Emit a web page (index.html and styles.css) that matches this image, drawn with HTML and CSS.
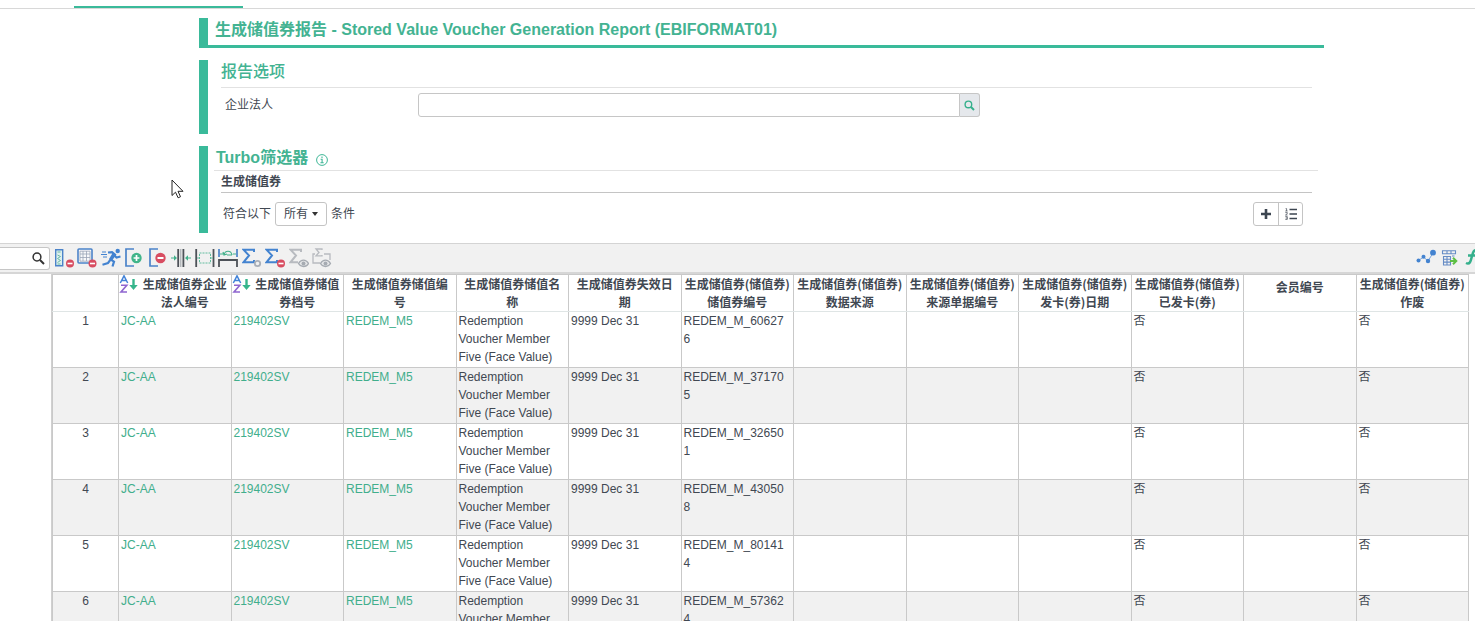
FILE: index.html
```html
<!DOCTYPE html>
<html lang="zh-CN">
<head>
<meta charset="utf-8">
<title>生成储值券报告</title>
<link rel="stylesheet" href="styles.css">
</head>
<body>
<div class="tabstrip"><div class="tab-active"></div></div>

<main class="form">
  <h1 class="title">生成储值券报告 - Stored Value Voucher Generation Report (EBIFORMAT01)</h1>

  <section class="panel options">
    <h2 class="panel-heading">报告选项</h2>
    <div class="field">
      <label for="entity">企业法人</label>
      <div class="lookup">
        <input id="entity" type="text">
        <button type="button" aria-label="查找"><svg width="11" height="11" viewBox="0 0 11 11" fill="none" stroke="#35b08c"><circle cx="4.4" cy="4.4" r="3.3" stroke-width="1.4"/><path d="M7 7l3 3" stroke-width="2"/></svg></button>
      </div>
    </div>
  </section>

  <section class="panel turbo">
    <h2 class="panel-heading">Turbo筛选器
      <svg class="info" width="12" height="12" viewBox="0 0 12 12" fill="none" stroke="#3fb797"><circle cx="6" cy="6" r="5.4"/><path d="M6 2.6v1.3M4.6 5.3h1.5v3.4M4.4 8.8h3.3" stroke-width="1.1"/></svg>
    </h2>
    <h3 class="group">生成储值券</h3>
    <div class="match">
      <span>符合以下</span>
      <button type="button" class="btn">所有 <i class="caret"></i></button>
      <span>条件</span>
      <div class="btn-group">
        <button type="button" aria-label="添加"><svg width="10" height="10" viewBox="0 0 10 10"><path d="M5 0v10M0 5h10" stroke="#3c4550" stroke-width="2.6"/></svg></button>
        <button type="button" aria-label="编号列表"><svg width="12" height="12" viewBox="0 0 12 12" fill="none" stroke="#3c4550"><path d="M4.5 1.5H12M4.5 6H12M4.5 10.5H12" stroke-width="1.3"/><path d="M.6 .6h1V3M.3 3h2.3M.3 4.6h2v1L.5 7h2M.3 8.6h2v2.8h-2M.7 10h1.6" stroke-width=".7"/></svg></button>
      </div>
    </div>
  </section>
</main>

<div class="toolbar">
  <div class="search">
    <input type="text" aria-label="搜索">
    <svg width="13" height="13" viewBox="0 0 13 13" fill="none" stroke="#333"><circle cx="5" cy="5" r="3.9" stroke-width="1.5"/><path d="M8 8l4 4" stroke-width="2"/></svg>
  </div>
  <div class="tools">
    <button type="button" aria-label="删除列"><svg viewBox="0 0 20 20"><path d="M1.7 1.7h7v16h-7z" fill="#dcefed" stroke="#4b83c9" stroke-width="1.4"/><path d="M3.5 4h3M3.5 7l3 1.5-3 2 3 2-3 2M3.5 16h3" fill="none" stroke="#66b8a4"/><circle cx="16" cy="15.5" r="4" fill="#d84d61"/><path d="M13.5 15.5h5" stroke="#fff" stroke-width="1.6"/></svg></button>
    <button type="button" aria-label="删除表格"><svg viewBox="0 0 20 20"><rect x="1" y="1" width="14" height="14" rx="1" fill="#f7f8fb" stroke="#4b83c9" stroke-width="1.6"/><path d="M3 6h10M3 9.5h10M6 3v10M9.5 3v10M3 3.2h10v10H3z" fill="none" stroke="#9ba5b8" stroke-width=".8"/><circle cx="15.5" cy="15.5" r="4" fill="#d84d61"/><path d="M13 15.5h5" stroke="#fff" stroke-width="1.6"/></svg></button>
    <button type="button" aria-label="运行"><svg viewBox="0 0 20 20" fill="none" stroke="#4383d0"><circle cx="16.7" cy="3" r="2.2" fill="#4383d0" stroke="none"/><path d="M7 4.5l4-.3 3 2.5-4 5 3 2-1.5 4.8" stroke-width="2.2"/><path d="M10 11l-3 4-5.5 1.7M13 7l2.5 2.5 4-1" stroke-width="2.1"/><path d="M12 4.5L8 11l2.5 1.5L15 7z" fill="#4383d0" stroke="none"/><path d="M1 4h4M0 6.5h6M2 9h4" stroke-width="1"/></svg></button>
    <button type="button" aria-label="插入列"><svg viewBox="0 0 20 20"><path d="M10 1H2v17h8M5 18h5" fill="none" stroke="#4b83c9" stroke-width="1.7"/><circle cx="12.5" cy="10" r="5.2" fill="#41b58a"/><path d="M9.6 10h5.8M12.5 7.1v5.8" stroke="#fff" stroke-width="1.7"/></svg></button>
    <button type="button" aria-label="移除列"><svg viewBox="0 0 20 20"><path d="M10 1H2v17h8" fill="none" stroke="#4b83c9" stroke-width="1.7"/><circle cx="12.5" cy="10" r="5.2" fill="#d84d61"/><path d="M9.5 10h6" stroke="#fff" stroke-width="2"/></svg></button>
    <button type="button" aria-label="收窄列"><svg viewBox="0 0 20 20"><path d="M7.2 1v18M12.4 1v18" stroke="#4d5258" stroke-width="1.8"/><path d="M9.8 1v18" stroke="#9aa0a6"/><path d="M0 10h5M20 10h-5" stroke="#42b18b" stroke-width="1.2"/><path d="M3 7.2L6 10l-3 2.8zM17 7.2L14 10l3 2.8z" fill="#42b18b"/></svg></button>
    <button type="button" aria-label="适合列宽"><svg viewBox="0 0 20 20" fill="none"><path d="M1.2 1v18M18.5 1v18" stroke="#4d5258" stroke-width="1.8"/><path d="M4.5 5h11v10h-11z" stroke="#62bd9f" stroke-dasharray="2 1"/><path d="M2 10h3M15 10h3" stroke="#62bd9f"/></svg></button>
    <button type="button" aria-label="还原列宽"><svg viewBox="0 0 20 20" fill="none"><path d="M1 1v8M19 1v8" stroke="#4b83c9" stroke-width="1.7"/><path d="M1 19v-7h18v7" stroke="#4d5258" stroke-width="1.8"/><path d="M2 6h3M15 6h3M6 7c1-5 7-5 8 0M5 4l1 3 3-1M14 7H9" stroke="#42b18b" stroke-width="1.2"/></svg></button>
    <button type="button" aria-label="合计设置"><svg viewBox="0 0 20 20" fill="none"><path d="M12 4V1.7H1.5L7 7.5l-5.5 6.8H12V12" stroke="#4383d0" stroke-width="2"/><circle cx="15.5" cy="15.5" r="2.7" stroke="#a9afb8" stroke-width="1.8"/></svg></button>
    <button type="button" aria-label="移除合计"><svg viewBox="0 0 20 20" fill="none"><path d="M12 4V1.7H1.5L7 7.5l-5.5 6.8H12V12" stroke="#4383d0" stroke-width="2"/><circle cx="16" cy="15.5" r="4" fill="#d84d61"/><path d="M13.5 15.5h5" stroke="#fff" stroke-width="1.6"/></svg></button>
    <button type="button" aria-label="显示合计"><svg viewBox="0 0 20 20" fill="none"><path d="M12 4V1.7H1.5L7 7.5l-5.5 6.8H9" stroke="#b8bbc0" stroke-width="2"/><path d="M9.5 15.5c2.5-4.5 7.5-4.5 10 0-2.5 4-7.5 4-10 0z" fill="#e8e9eb" stroke="#a6abb2" stroke-width="1.3"/><circle cx="14.5" cy="15.5" r="2" fill="#a6abb2"/></svg></button>
    <button type="button" aria-label="显示小计"><svg viewBox="0 0 20 20" fill="none"><path d="M10 2V1H4l3 3.5-3 3.3h6V7" stroke="#b8bbc0" stroke-width="1.3"/><path d="M3 6H1v9h7M12 6h6v6" stroke="#b8bbc0" stroke-width="1.3"/><path d="M8.5 15.5c2.5-4.5 7.5-4.5 10 0-2.5 4-7.5 4-10 0z" fill="#e8e9eb" stroke="#a6abb2" stroke-width="1.3"/><circle cx="13.5" cy="15.5" r="2" fill="#a6abb2"/></svg></button>
  </div>
  <div class="tools-right">
    <button type="button" aria-label="图表"><svg viewBox="0 0 20 20"><path d="M2.5 12.5l5-3.5 4.5 4L17 5" fill="none" stroke="#79a5dc"/><g fill="#4383d0"><circle cx="2.5" cy="12.5" r="2"/><circle cx="7.5" cy="8.7" r="2"/><circle cx="12" cy="13" r="2.2"/><circle cx="17" cy="4.7" r="2.9"/></g></svg></button>
    <button type="button" aria-label="汇总表"><svg viewBox="0 0 20 20" fill="none"><path d="M3.5 2.7h13v3h-13zM4.5 8.5h7v8.5h-7zM8 8.5V17M4.5 11.3h7M4.5 14.1h7M8 2.7v3M12 2.7v3M13 8h2.5" stroke="#668cc5" stroke-width="1.1"/><path d="M11 13h5M14 9.7l3.3 3.3L14 16.3" stroke="#5dbf45" stroke-width="2"/></svg></button>
    <button type="button" aria-label="函数"><svg viewBox="0 0 20 20" fill="none"><path d="M15 3c-3-2-4 1-5 5-1.2 5-2 9-6 7M6 7.5h8" stroke="#35b08c" stroke-width="2.5"/></svg></button>
  </div>
</div>

<div class="grid-wrap">
<table class="grid">
  <colgroup><col class="col-num"><col span="12"></colgroup>
  <thead>
    <tr>
      <th></th>
      <th><div class="sorted"><svg width="20" height="18" viewBox="0 0 20 18" fill="none"><path d="M1.3 8L5 .8 8.7 8M2.6 5.6h4.8" stroke="#4383d8" stroke-width="1.5"/><path d="M2 10.3h5.8L2 17h6" stroke="#8f65cf" stroke-width="1.6"/><path d="M14.5 4v8" stroke="#36b58c" stroke-width="2.4"/><path d="M10.3 10h8.4l-4.2 5z" fill="#36b58c"/></svg><span>生成储值券企业法人编号</span></div></th>
      <th><div class="sorted"><svg width="20" height="18" viewBox="0 0 20 18" fill="none"><path d="M1.3 8L5 .8 8.7 8M2.6 5.6h4.8" stroke="#4383d8" stroke-width="1.5"/><path d="M2 10.3h5.8L2 17h6" stroke="#8f65cf" stroke-width="1.6"/><path d="M14.5 4v8" stroke="#36b58c" stroke-width="2.4"/><path d="M10.3 10h8.4l-4.2 5z" fill="#36b58c"/></svg><span>生成储值券储值券档号</span></div></th>
      <th>生成储值券储值编号</th>
      <th>生成储值券储值名称</th>
      <th>生成储值券失效日期</th>
      <th>生成储值券(储值券)<br>储值券编号</th>
      <th>生成储值券(储值券)<br>数据来源</th>
      <th>生成储值券(储值券)<br>来源单据编号</th>
      <th>生成储值券(储值券)<br>发卡(券)日期</th>
      <th>生成储值券(储值券)<br>已发卡(券)</th>
      <th class="single">会员编号</th>
      <th>生成储值券(储值券)<br>作废</th>
    </tr>
  </thead>
  <tbody>
    <tr><td>1</td><td><a href="#">JC-AA</a></td><td><a href="#">219402SV</a></td><td><a href="#">REDEM_M5</a></td><td>Redemption Voucher Member Five (Face Value)</td><td>9999 Dec 31</td><td>REDEM_M_606276</td><td></td><td></td><td></td><td>否</td><td></td><td>否</td></tr>
    <tr><td>2</td><td><a href="#">JC-AA</a></td><td><a href="#">219402SV</a></td><td><a href="#">REDEM_M5</a></td><td>Redemption Voucher Member Five (Face Value)</td><td>9999 Dec 31</td><td>REDEM_M_371705</td><td></td><td></td><td></td><td>否</td><td></td><td>否</td></tr>
    <tr><td>3</td><td><a href="#">JC-AA</a></td><td><a href="#">219402SV</a></td><td><a href="#">REDEM_M5</a></td><td>Redemption Voucher Member Five (Face Value)</td><td>9999 Dec 31</td><td>REDEM_M_326501</td><td></td><td></td><td></td><td>否</td><td></td><td>否</td></tr>
    <tr><td>4</td><td><a href="#">JC-AA</a></td><td><a href="#">219402SV</a></td><td><a href="#">REDEM_M5</a></td><td>Redemption Voucher Member Five (Face Value)</td><td>9999 Dec 31</td><td>REDEM_M_430508</td><td></td><td></td><td></td><td>否</td><td></td><td>否</td></tr>
    <tr><td>5</td><td><a href="#">JC-AA</a></td><td><a href="#">219402SV</a></td><td><a href="#">REDEM_M5</a></td><td>Redemption Voucher Member Five (Face Value)</td><td>9999 Dec 31</td><td>REDEM_M_801414</td><td></td><td></td><td></td><td>否</td><td></td><td>否</td></tr>
    <tr><td>6</td><td><a href="#">JC-AA</a></td><td><a href="#">219402SV</a></td><td><a href="#">REDEM_M5</a></td><td>Redemption Voucher Member Five (Face Value)</td><td>9999 Dec 31</td><td>REDEM_M_573624</td><td></td><td></td><td></td><td>否</td><td></td><td>否</td></tr>
  </tbody>
</table>
</div>

<svg class="pointer" width="13" height="20" viewBox="0 0 13 20"><path d="M1 1v15.5l3.5-3.3 2.6 5.6 2.4-1.1-2.5-5.4H12z" fill="#fff" stroke="#222"/></svg>
</body>
</html>
```
FILE: styles.css
```css
* { box-sizing: border-box; }
html, body { height: 100%; }
body {
  margin: 0;
  display: flex;
  flex-direction: column;
  overflow: hidden;
  background: #fff;
  color: #414852;
  font: 12px/18px "Liberation Sans", "Noto Sans CJK SC", sans-serif;
}
button, input { font: inherit; color: inherit; margin: 0; }
button { padding: 0; display: flex; align-items: center; justify-content: center; }
h1, h2, h3 { margin: 0; }
a { color: #41ae8c; text-decoration: none; }

.tabstrip { flex: none; height: 9px; padding: 6px 0 0 74px; border-bottom: 1px solid #d8d8d8; }
.tab-active { width: 169px; height: 2px; background: #3aba9a; }

.form { flex: none; margin: 9px 151px 10px 199px; }
.title {
  height: 30px;
  padding-left: 7px;
  border-left: 9px solid #3aba9a;
  border-bottom: 3px solid #3aba9a;
  font-size: 16px;
  line-height: 24px;
  color: #43b392;
}
.panel { margin-top: 12px; border-left: 9px solid #3aba9a; }
.panel-heading { font-size: 16px; line-height: 24px; color: #43b392; }

.options { height: 74px; padding: 0 12px 0 13px; }
.options .panel-heading { height: 28px; font-weight: 500; border-bottom: 1px solid #e2e2e2; }
.field { display: grid; grid-template-columns: 193px minmax(0, 562px); align-items: center; padding: 5px 0 0 4px; }
.lookup { display: flex; height: 24px; }
.lookup input {
  flex: 1;
  min-width: 0;
  border: 1px solid #c6c6c6;
  border-radius: 3px 0 0 3px;
  background: #fff;
}
.lookup button {
  width: 20px;
  border: 1px solid #c6c6c6;
  border-left: 0;
  border-radius: 0 3px 3px 0;
  background: #e5e8ec;
}

.turbo { height: 87px; padding: 0 6px; }
.turbo .panel-heading { height: 25px; padding-left: 2px; border-bottom: 1px solid #e2e2e2; line-height: 23px; }
.info { margin-left: 3px; vertical-align: -3px; }
.group { margin: 0 6px 0 7px; padding-top: 2px; height: 22px; border-bottom: 1px solid #c4c4c4; font-size: 12px; line-height: 18px; }
.match { display: flex; align-items: center; gap: 4px; margin: 9px 15px 0 9px; }
.btn {
  height: 24px;
  width: 52px;
  gap: 4px;
  border: 1px solid #c4c4c4;
  border-radius: 3px;
  background: #fff;
}
.caret { border: 3px solid transparent; border-top: 4px solid #333; border-bottom: 0; }
.btn-group { display: flex; margin-left: auto; height: 24px; border: 1px solid #c4c4c4; border-radius: 3px; }
.btn-group button { width: 24px; border: 0; background: none; }
.btn-group button + button { border-left: 1px solid #c4c4c4; }

.toolbar {
  flex: none;
  display: flex;
  align-items: center;
  height: 31px;
  overflow: hidden;
  background: #f1f1f1;
  border-top: 1px solid #d4d4d4;
  border-bottom: 2px solid #d6d6d6;
}
.search { display: flex; align-items: center; width: 50px; height: 23px; border: 1px solid #c6c6c6; border-left: 0; border-radius: 0 3px 3px 0; background: #fff; }
.search input { width: 32px; height: 20px; padding: 0; border: 0; background: none; }
.tools { display: flex; justify-content: space-between; width: 278px; margin-left: 4px; }
.tools button, .tools-right button { flex: none; width: 20px; height: 20px; border: 0; background: none; }
.tools svg, .tools-right svg { width: 20px; height: 20px; }
.tools-right { display: flex; gap: 3px; margin: 0 -7px 0 auto; }

.grid-wrap { flex: 1; min-height: 0; overflow: hidden; margin: 0 6px 0 51px; border-left: 1px solid #d0d0d0; }
.grid { width: 100%; table-layout: fixed; border-collapse: collapse; }
.col-num { width: 66px; }
.grid th, .grid td { border: 1px solid #c9c9c9; vertical-align: top; }
.grid th { height: 37px; padding: 0 3px; font: bold 12px/18px "Noto Sans CJK SC", sans-serif; border-bottom-color: #dfe5e5; white-space: normal; }
.grid th.single { padding-top: 3px; }
.grid td { height: 56px; padding: 0 4px 1px 2px; overflow-wrap: anywhere; }
.grid td:first-child { text-align: center; padding-right: 2px; }
.grid tbody tr:nth-child(even) { background: #f1f1f1; }
.grid tbody tr:first-child td { border-top-color: #dfe5e5; }
.sorted { display: flex; margin: 0 -3px; }
.sorted svg { flex: none; }
.sorted span { flex: 1; min-width: 0; }

.pointer { position: absolute; left: 171px; top: 179px; }
```
